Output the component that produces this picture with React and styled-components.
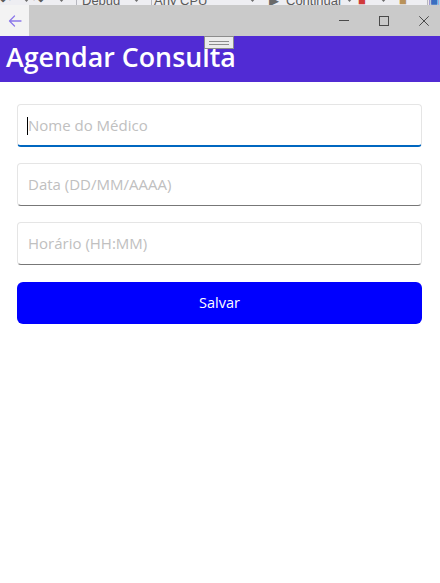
import React from "react";
import styled, { createGlobalStyle } from "styled-components";

const Global = createGlobalStyle`
  html, body { margin: 0; padding: 0; background: #ffffff; }
  body { font-family: "Open Sans", "Noto Sans", sans-serif; }
  * { box-sizing: border-box; }
`;

const Page = styled.div`
  position: relative;
  width: 440px;
  height: 583px;
  overflow: hidden;
  background: #ffffff;
  display: flex;
  flex-direction: column;
`;

const ToolStrip = styled.div`
  height: 5px;
  flex: none;
  background: #eeeef2;
  overflow: hidden;
  display: flex;
  align-items: flex-end;
  font-family: "Liberation Sans", sans-serif;
  font-size: 13px;
  color: #5a5a5a;
`;

const ToolRow = styled.div`
  display: flex;
  align-items: center;
  height: 18px;
  margin-bottom: -4px;
  white-space: nowrap;
`;

const ToolItem = styled.span`
  width: ${(p) => p.$w}px;
  flex: none;
  display: flex;
  align-items: center;
  padding-left: ${(p) => p.$pl || 0}px;
  border-left: ${(p) => (p.$sep ? "1px solid #b8b8c0" : "none")};
  color: ${(p) => p.$c || "#5a5a5a"};
`;

const TitleBar = styled.div`
  height: 31px;
  flex: none;
  background: #cacaca;
  display: flex;
  align-items: stretch;
`;

const BackButton = styled.div`
  width: 29px;
  background: #f3f3f3;
  display: flex;
  align-items: center;
  justify-content: center;
  padding-top: 1px;
`;

const Spacer = styled.div`
  flex: 1;
`;

const Controls = styled.div`
  display: flex;
  margin-right: -4px;
`;

const CtrlButton = styled.div`
  width: 40px;
  display: flex;
  align-items: center;
  justify-content: center;
`;

const Header = styled.div`
  height: 46px;
  flex: none;
  background: #512bd4;
  display: flex;
  align-items: center;
  padding-left: 6px;
`;

const Title = styled.h1`
  margin: 0;
  font-family: "Open Sans", "Noto Sans", sans-serif;
  font-weight: 600;
  font-size: 26.8px;
  color: #ffffff;
  line-height: 1;
  margin-top: -3px;
`;

const Grip = styled.div`
  position: absolute;
  left: 204px;
  top: 36px;
  width: 30px;
  height: 13px;
  background: #ebebeb;
  border: 1px solid #8c8c8c;
  display: flex;
  flex-direction: column;
  align-items: center;
  justify-content: center;
  gap: 2px;
`;

const GripLine = styled.div`
  width: 20px;
  height: 1px;
  background: #8c8c8c;
`;

const Form = styled.div`
  display: flex;
  flex-direction: column;
  gap: 16px;
  padding: 22px 18px 0 17px;
`;

const FieldWrap = styled.div`
  position: relative;
`;

const Field = styled.input`
  display: block;
  width: 100%;
  height: 43px;
  margin: 0;
  padding: 0 10px 1px 10px;
  border: 1px solid #e5e5e5;
  border-bottom: ${(p) => (p.$focused ? "2px solid #0067c0" : "1px solid #777777")};
  border-radius: 4px;
  background: #ffffff;
  font-family: "Open Sans", "Noto Sans", sans-serif;
  font-size: 15px;
  color: #1a1a1a;
  outline: none;
  &::placeholder {
    color: #c0c0c0;
    opacity: 1;
  }
`;

const Caret = styled.span`
  position: absolute;
  left: 10px;
  top: 13px;
  width: 1px;
  height: 18px;
  background: #000000;
`;

const SaveButton = styled.button`
  margin-top: 1px;
  height: 42px;
  width: 100%;
  border: none;
  border-radius: 6px;
  background: #0000ff;
  color: #ffffff;
  font-family: "Open Sans", "Noto Sans", sans-serif;
  font-size: 14.5px;
  cursor: pointer;
  padding: 0 0 2px 0;
`;

const Caretdown = () => (
  <svg width="7" height="4" viewBox="0 0 7 4">
    <path d="M0 0 L7 0 L3.5 4 Z" fill="#6d6d6d" />
  </svg>
);

export default function App() {
  return (
    <>
      <Global />
      <Page>
        <ToolStrip>
          <ToolRow>
            <ToolItem $w={23} $pl={0}>↶</ToolItem>
            <ToolItem $w={10}><Caretdown /></ToolItem>
            <ToolItem $w={25} $pl={0}>↷</ToolItem>
            <ToolItem $w={10}><Caretdown /></ToolItem>
            <ToolItem $w={8} $sep />
            <ToolItem $w={57} $pl={5} $sep>Debug</ToolItem>
            <ToolItem $w={10}><Caretdown /></ToolItem>
            <ToolItem $w={8} $sep />
            <ToolItem $w={98} $pl={2} $sep>Any CPU</ToolItem>
            <ToolItem $w={10}><Caretdown /></ToolItem>
            <ToolItem $w={10} $sep />
            <ToolItem $w={17} $c="#6a6a6a">▶</ToolItem>
            <ToolItem $w={60}>Continuar</ToolItem>
            <ToolItem $w={12}><Caretdown /></ToolItem>
            <ToolItem $w={22} $c="#d03a3a">■</ToolItem>
            <ToolItem $w={10}><Caretdown /></ToolItem>
            <ToolItem $w={9} $sep />
            <ToolItem $w={28} $c="#b8925a">■</ToolItem>
            <ToolItem $w={12} $sep $c="#3a6ec0">▣</ToolItem>
          </ToolRow>
        </ToolStrip>
        <TitleBar>
          <BackButton>
            <svg width="14" height="12" viewBox="0 0 14 12">
              <path
                d="M13 6 H1.5 M6.5 1 L1.5 6 L6.5 11"
                fill="none"
                stroke="#8c78ea"
                strokeWidth="1.3"
                strokeLinecap="round"
                strokeLinejoin="round"
              />
            </svg>
          </BackButton>
          <Spacer />
          <Controls>
            <CtrlButton>
              <svg width="10" height="10" viewBox="0 0 10 10">
                <path d="M0 4.5 H10" stroke="#4a4a4a" strokeWidth="1" />
              </svg>
            </CtrlButton>
            <CtrlButton>
              <svg width="10" height="10" viewBox="0 0 10 10">
                <rect x="0.5" y="0.5" width="9" height="9" fill="none" stroke="#4a4a4a" strokeWidth="1" />
              </svg>
            </CtrlButton>
            <CtrlButton>
              <svg width="10" height="10" viewBox="0 0 10 10">
                <path d="M0.3 0.3 L9.7 9.7 M9.7 0.3 L0.3 9.7" stroke="#4a4a4a" strokeWidth="1" />
              </svg>
            </CtrlButton>
          </Controls>
        </TitleBar>
        <Header>
          <Title>Agendar Consulta</Title>
        </Header>
        <Grip>
          <GripLine />
          <GripLine />
        </Grip>
        <Form>
          <FieldWrap>
            <Field $focused placeholder="Nome do Médico" readOnly />
            <Caret />
          </FieldWrap>
          <FieldWrap>
            <Field placeholder="Data (DD/MM/AAAA)" readOnly />
          </FieldWrap>
          <FieldWrap>
            <Field placeholder="Horário (HH:MM)" readOnly />
          </FieldWrap>
          <SaveButton>Salvar</SaveButton>
        </Form>
      </Page>
    </>
  );
}
